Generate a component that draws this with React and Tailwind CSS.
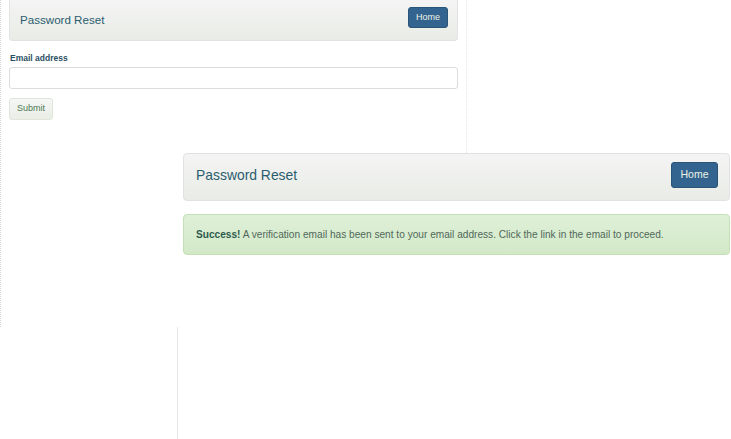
import React from "react";

const HeaderBar = ({ big }) => (
  <div
    className={`flex items-center justify-between border border-[#e2e2e2] bg-gradient-to-b from-[#f4f4f4] to-[#e9ece6] ${
      big ? "h-[48px] pb-[3px] pl-[12px] pr-[11px] rounded-[4px]" : "h-[41px] pb-[3px] pl-[10px] pr-[9px] rounded-b-[4px] border-t-0"
    }`}
  >
    <span className={`text-[#2b5d6e] ${big ? "text-[13.9px]" : "text-[11.6px] mt-[2px]"}`}>Password Reset</span>
    <button
      className={`bg-[#33648f] border border-[#2a5478] text-[#eef3e6] rounded-[3px] ${
        big ? "w-[47px] h-[26px] text-[10.5px] mb-[2px]" : "w-[40px] h-[21px] text-[9px] mb-[2px]"
      }`}
    >
      Home
    </button>
  </div>
);

export default function App() {
  return (
    <div
      className="relative w-[731px] h-[439px] bg-white overflow-hidden"
      style={{ fontFamily: '"Liberation Sans", Arial, sans-serif' }}
    >
      {/* first screenshot: the form */}
      <div className="absolute left-0 top-0 w-[467px] h-[327px] border-l border-dotted border-l-[#d8d8d8] border-r border-r-[#e6e6e6] px-[8px]">
        <HeaderBar />
        <label className="block mt-[11px] h-[12px] leading-[12px] text-[8.5px] font-bold text-[#2a4f63] pl-[1px]">
          Email address
        </label>
        <input
          type="email"
          className="block mt-[3px] w-full h-[22px] border border-[#dcdcdc] rounded-[3px] bg-white outline-none"
        />
        <button className="block mt-[9px] w-[44px] h-[22px] border border-[#dde6d8] rounded-[3px] bg-gradient-to-b from-[#f6f6f6] to-[#e9eee6] text-[9px] text-[#4b7a52]">
          Submit
        </button>
      </div>

      {/* second screenshot: the success state */}
      <div className="absolute left-[177px] top-[153px] w-[554px] h-[286px] bg-white pl-[6px] pr-[1px]">
        <HeaderBar big />
        <div className="mt-[13px] h-[41px] flex items-center pl-[12px] border border-[#c4e0b4] rounded-[4px] bg-gradient-to-b from-[#dff0d8] to-[#d2e9c8] text-[10.15px] text-[#51685a]">
          <span>
            <b className="text-[#2e5a4c]">Success!</b> A verification email has been sent to your email address. Click the link in the email to proceed.
          </span>
        </div>
      </div>
      <div className="absolute left-[177px] top-[327px] w-px h-[112px] bg-[#e8e8e8]" />
    </div>
  );
}
